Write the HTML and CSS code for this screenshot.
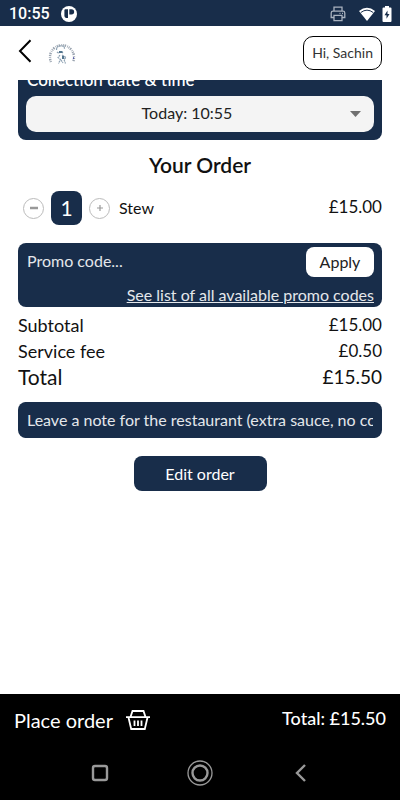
FILE: index.html
```html
<!DOCTYPE html>
<html lang="en">
<head>
<meta charset="utf-8">
<meta name="viewport" content="width=device-width, initial-scale=1">
<title>Your Order</title>
<link rel="stylesheet" href="styles.css">
</head>
<body>
<div class="status">
  <span class="clock">10:55</span>
  <svg class="app" width="16" height="16" viewBox="0 0 16 16"><circle cx="8" cy="8" r="8" fill="#fff"/><path d="M4 3.200h3v8.900H5Q3.600 11.500 3.400 10V4z" fill="#182d4a"/><path d="M8.300 3.200h2.200a2.600 2.600 0 0 1 0 5.300H8.300z" fill="#182d4a"/></svg>
  <span class="spacer"></span>
  <svg class="printer" width="16" height="16" viewBox="0 0 16 16" fill="none" stroke="#a9b2bf" stroke-width="1.3"><path d="M4 5V1.2h8V5M4 11.5H1.2V7q0-1.8 1.8-1.8h10q1.8 0 1.8 1.8v4.500H12M4 9.300h8v5.400H4z"/><path d="M9.500 7.300h1M12 7.300h1"/></svg>
  <svg class="wifi" width="18" height="15" viewBox="0 0 18 15"><path d="M1 4Q9-2.500 17 4L9 14z" fill="#fff"/><path d="M2.800 5.500Q9 .8 15.200 5.500" fill="none" stroke="#182d4a" stroke-width="1"/></svg>
  <svg width="10" height="16" viewBox="0 0 10 16"><path d="M3 0h4v1.500h1.500q1 0 1 1V15q0 1-1 1h-7q-1 0-1-1V2.500q0-1 1-1H3z" fill="#fff"/><path d="M5.500 4.500 2.500 9.300h2v3.500l3-4.800h-2z" fill="#182d4a"/></svg>
</div>
<header class="header">
  <button class="back" aria-label="Back"><svg width="14" height="24" viewBox="0 0 14 24"><path d="M12.500 1.200 2 12l10.500 10.800" fill="none" stroke="#000" stroke-width="2"/></svg></button>
  <svg class="logo" width="28" height="24" viewBox="0 0 28 24">
    <path d="M3 21A12 12 0 1 1 25 21" fill="none" stroke="#9aa4b0" stroke-width="2.400" stroke-dasharray="1 .8 1.500 1.200 .7 .9"/>
    <path d="M8.500 9q0-4 4-4.200 4-.3 4 3M9 11q2 2 4-.5l2.500 2M12 14l-2 2.500 2.500 2-2 4M14 14l4 2.500-2 2 1.500 4M13 19l2 3" fill="none" stroke="#8ea2b3" stroke-width="1.200" stroke-dasharray="2 .6"/>
    <path d="M11 10h3.500v2H11zM14 15h2v3h-2z" fill="#54758e"/><path d="M25 16.500h1v1h-1z" fill="#00008b"/>
  </svg>
  <button class="user">Hi, Sachin</button>
</header>
<main class="main">
  <section class="card collection">
    <label for="time">Collection date &amp; time</label>
    <div class="pick">
      <select id="time"><option>Today: 10:55</option></select>
      <svg class="caret" width="11" height="6" viewBox="0 0 11 6"><path d="M0 0h11L5.500 6z" fill="#707070"/></svg>
    </div>
  </section>
  <h1>Your Order</h1>
  <div class="item">
    <button class="step" aria-label="Remove one"><svg width="8" height="8" viewBox="0 0 8 8"><path d="M0 4h8" stroke="#999" stroke-width="2.500"/></svg></button>
    <span class="qty">1</span>
    <button class="step" aria-label="Add one"><svg width="8" height="8" viewBox="0 0 8 8"><path d="M1 4h6M4 1v6" stroke="#999" stroke-width="1.200"/></svg></button>
    <span class="name">Stew</span>
    <span class="price">£15.00</span>
  </div>
  <section class="card promo">
    <div class="promo-row">
      <input type="text" aria-label="Promo code" placeholder="Promo code...">
      <button class="apply">Apply</button>
    </div>
    <a href="#">See list of all available promo codes</a>
  </section>
  <dl class="sums">
    <div><dt>Subtotal</dt><dd>£15.00</dd></div>
    <div><dt>Service fee</dt><dd>£0.50</dd></div>
    <div class="total"><dt>Total</dt><dd>£15.50</dd></div>
  </dl>
  <input class="note" type="text" aria-label="Note for the restaurant" placeholder="Leave a note for the restaurant (extra sauce, no coriander)">
  <button class="edit">Edit order</button>
</main>
<footer class="footer">
  <div class="order">
    <button class="place">Place order
      <svg width="24" height="20" viewBox="0 0 24 20" fill="none" stroke="#fff" stroke-width="1.800"><path d="M4.500 7 6.500 1h11l2 6M0 7.200h24M2.500 7.500l2.700 11.500h13.600L21.500 7.500M8.500 10.500V16M12 10.500V16M15.500 10.500V16"/></svg>
    </button>
    <span class="due">Total: £15.50</span>
  </div>
  <nav class="nav" aria-label="System">
    <button aria-label="Recent apps"><svg width="26" height="26" viewBox="0 0 26 26"><rect x="6" y="6" width="14" height="14" rx="2" fill="none" stroke="#999" stroke-width="2.400"/></svg></button>
    <button aria-label="Home"><svg width="26" height="26" viewBox="0 0 26 26" fill="none" stroke="#999"><circle cx="13" cy="13" r="12" stroke-width="1.300"/><circle cx="13" cy="13" r="7.500" stroke-width="2.400"/></svg></button>
    <button aria-label="Go back"><svg width="26" height="26" viewBox="0 0 26 26"><path d="M18 5 10 13l8 8" fill="none" stroke="#999" stroke-width="2.400"/></svg></button>
  </nav>
</footer>
</body>
</html>
```
FILE: styles.css
```css
* { box-sizing: border-box; }
body {
  margin: 0;
  min-height: 100vh;
  display: flex;
  flex-direction: column;
  background: #fff;
  color: #111;
  font: 16px/24px Lato, "Liberation Sans", sans-serif;
}
button, input, select {
  margin: 0;
  padding: 0;
  border: 0;
  background: none;
  color: inherit;
  font: inherit;
}
svg { display: block; flex: none; }
.status {
  display: flex;
  align-items: center;
  height: 26px;
  padding: 2px 8px 0 9px;
  background: #182d4a;
  color: #fff;
}
.clock { font: 500 16px/24px Roboto, sans-serif; }
.app { margin-left: 11px; }
.spacer { flex: 1; }
.wifi { margin: 0 6px 0 12px; }
.header {
  display: flex;
  align-items: center;
  height: 54px;
  padding: 0 18px;
}
.back { margin-bottom: 4px; }
.logo { margin-left: 16px; }
.user {
  height: 34px;
  margin-left: auto;
  padding: 0 8px;
  border: 1px solid #000;
  border-radius: 10px;
  color: #333;
  font-size: 14px;
}
.main {
  flex: 1;
  display: flex;
  flex-direction: column;
  padding: 0 18px;
  overflow: hidden;
}
.card {
  border-radius: 8px;
  background: #182d4a;
  color: #fff;
}
.collection {
  margin-top: -16px;
  padding: 4px 8px 8px;
}
.collection label { display: block; padding-left: 1px; font-weight: 500; font-size: 17px; }
.pick { position: relative; margin-top: 4px; }
.pick select {
  display: block;
  width: 100%;
  height: 36px;
  padding: 0 26px 2px 0;
  border-radius: 10px;
  background: #f4f4f4;
  color: #222;
  appearance: none;
  text-align-last: center;
}
.caret { position: absolute; right: 13px; top: 15px; pointer-events: none; }
h1 {
  margin: 11px 0 13px;
  text-align: center;
  font-size: 21px;
  line-height: 28px;
  font-weight: 600;
}
.item { display: flex; align-items: center; margin-top: -1px; padding-left: 5px; }
.step {
  display: grid;
  place-items: center;
  width: 21px;
  height: 21px;
  border: 1px solid #bbb;
  border-radius: 50%;
}
.qty {
  width: 31px;
  margin: 0 7px;
  border-radius: 8px;
  background: #182d4a;
  color: #fff;
  font-size: 21px;
  line-height: 34px;
  text-align: center;
}
.name { margin-left: 9px; }
.price { margin-left: auto; padding-bottom: 2px; font-size: 17px; }
.promo { margin-top: 18px; padding: 4px 8px 0; }
.promo-row { display: flex; }
.promo input { flex: 1; min-width: 0; padding: 0 0 2px 1px; }
::placeholder { color: #e4e7eb; opacity: 1; }
.apply {
  width: 68px;
  height: 30px;
  border-radius: 8px;
  background: #fff;
  color: #222;
}
.promo a { display: block; margin-top: 6px; color: #e4e7eb; text-align: right; }
.sums { margin: 5px 0 12px; font-size: 18px; line-height: 26px; }
.sums div { display: flex; justify-content: space-between; }
.sums dd { margin: 0; font-size: 17px; }
.sums .total { font-size: 21px; }
.sums .total dd { font-size: 19px; }
.note {
  height: 36px;
  padding-bottom: 2px;
  border-radius: 8px;
  border: solid #182d4a;
  border-width: 0 9px;
  background: #182d4a;
  color: #fff;
}
.edit {
  align-self: center;
  width: 133px;
  height: 35px;
  margin-top: 18px;
  border-radius: 8px;
  background: #182d4a;
  color: #fff;
}
.footer { background: #000; color: #fff; }
.order {
  display: flex;
  align-items: center;
  justify-content: space-between;
  height: 52px;
  padding: 0 14px;
}
.place { display: flex; align-items: center; gap: 13px; font-size: 20px; }
.due { padding-bottom: 4px; font-size: 18px; font-weight: 500; }
.nav {
  display: flex;
  justify-content: center;
  gap: 74px;
  height: 54px;
  align-items: center;
}
```
